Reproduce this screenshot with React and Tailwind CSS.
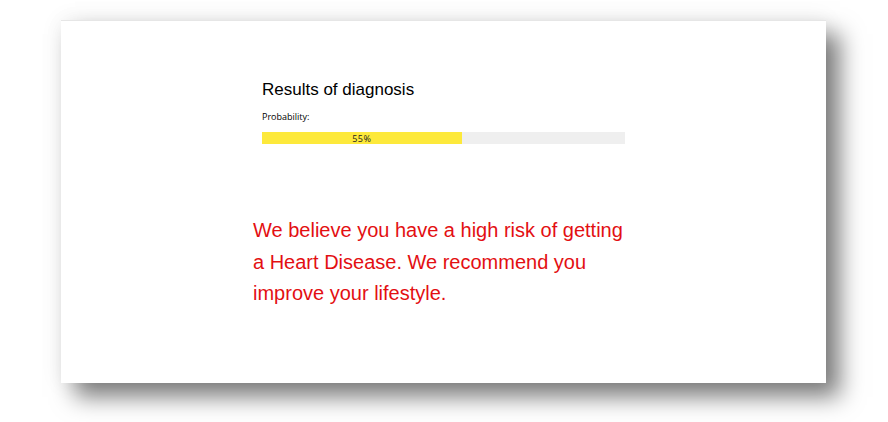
import React from "react";

export default function App() {
  const probability = 55;
  return (
    <div className="w-[888px] h-[422px] bg-white overflow-hidden pt-[20px] pl-[61px]">
      {/* Result card */}
      <div className="w-[765px] h-[363px] bg-white border-t border-[#e6e6e6] shadow-[14px_14px_22px_rgba(0,0,0,0.5),0_0_22px_rgba(0,0,0,0.07)] pt-[59px]">
        <div className="ml-[201px] w-[363px]">
          <h2 className="text-[17px] leading-[20px] text-black font-['Liberation_Sans',Arial,sans-serif]">
            Results of diagnosis
          </h2>
          <p className="mt-[11px] text-[9px] leading-[12px] text-black font-['Open_Sans','Noto_Sans',sans-serif]">
            Probability:
          </p>
          <div className="mt-[9px] h-[12px] w-full bg-[#efefef] flex">
            <div
              className="h-full bg-[#fde93b] flex items-center justify-center text-[9px] leading-none text-[#222] tracking-[0.5px] font-['Open_Sans','Noto_Sans',sans-serif]"
              style={{ width: `${probability}%` }}
            >
              {probability}%
            </div>
          </div>
        </div>

        <p className="ml-[192px] mt-[71px] w-[378px] text-[20px] leading-[31.5px] text-[#e30f12] font-['Liberation_Sans',Arial,sans-serif]">
          We believe you have a high risk of getting a Heart Disease. We recommend you improve your lifestyle.
        </p>
      </div>
    </div>
  );
}
